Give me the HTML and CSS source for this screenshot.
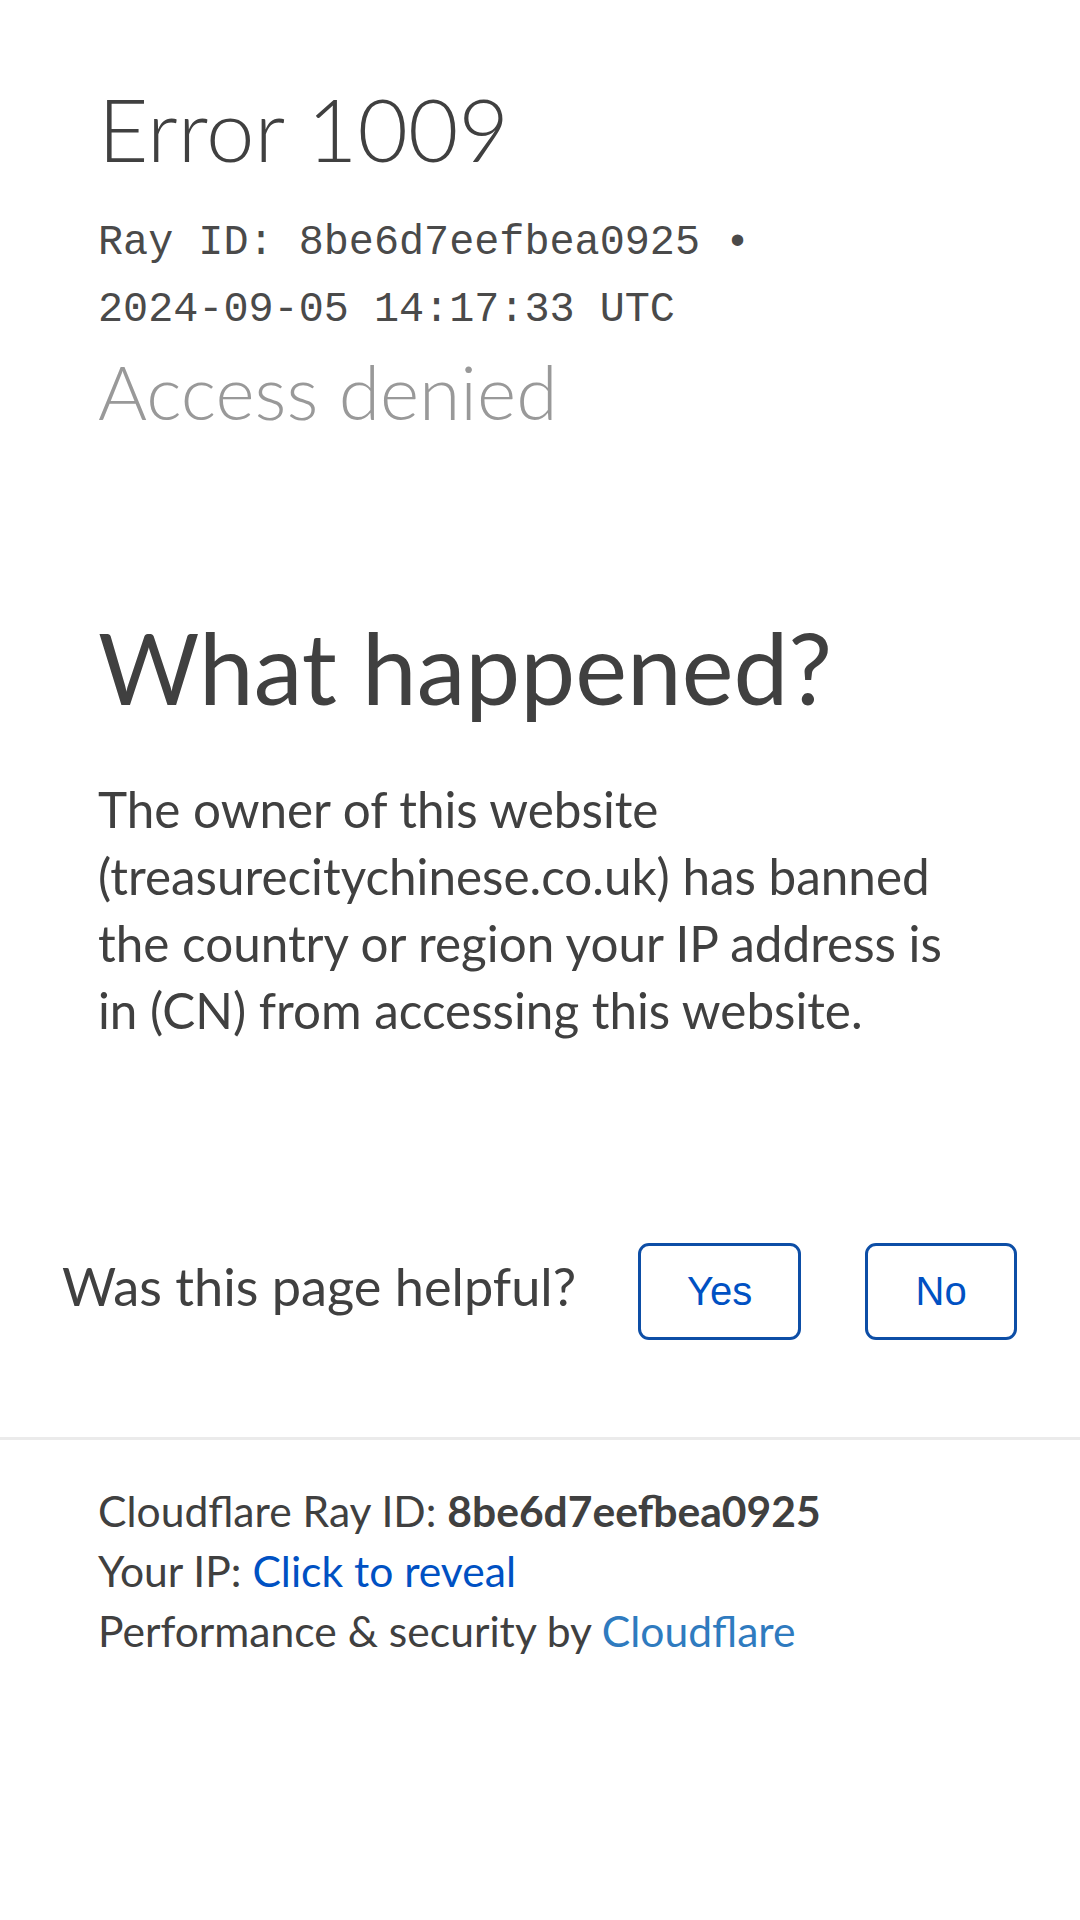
FILE: index.html
```html
<!DOCTYPE html>
<html lang="en">
<head>
<meta charset="utf-8">
<title>Access denied | treasurecitychinese.co.uk used Cloudflare to restrict access</title>
<link rel="stylesheet" href="styles.css">
</head>
<body>
<main class="page">
  <header class="error-header">
    <h1 class="error-title">Error 1009</h1>
    <div class="ray-meta"><span class="nowrap">Ray ID: 8be6d7eefbea0925</span> <span class="sep">&bull;</span> <span class="nowrap">2024-09-05 14:17:33 UTC</span></div>
    <h2 class="error-subtitle">Access denied</h2>
  </header>

  <section class="what-happened">
    <h2 class="section-title">What happened?</h2>
    <p class="section-text">The owner of this website (treasurecitychinese.co.uk) has banned the country or region your IP address is in (CN) from accessing this website.</p>
  </section>

  <div class="feedback">
    <span class="feedback-question">Was this page helpful?</span>
    <button class="feedback-btn feedback-btn-yes" type="button">Yes</button>
    <button class="feedback-btn feedback-btn-no" type="button">No</button>
  </div>

  <footer class="footer">
    <p class="footer-line">Cloudflare Ray ID: <strong class="ray-strong">8be6d7eefbea0925</strong></p>
    <p class="footer-line">Your IP: <a class="reveal-link" href="#">Click to reveal</a></p>
    <p class="footer-line">Performance &amp; security by <a class="cf-link" href="#">Cloudflare</a></p>
  </footer>
</main>
</body>
</html>
```
FILE: styles.css
```css
html, body {
  margin: 0;
  padding: 0;
  background: #ffffff;
}

body {
  font-family: "Lato", "Open Sans", sans-serif;
  color: #404040;
}

.page {
  display: flex;
  flex-direction: column;
  padding-top: 79px;
}

.error-header {
  padding: 0 98px;
}

.error-title {
  margin: 0;
  font-size: 87px;
  line-height: 100px;
  font-weight: 300;
  color: #404040;
}

.ray-meta {
  margin-top: 31px;
  font-family: "Liberation Mono", "Courier New", monospace;
  font-size: 41.8px;
  line-height: 67px;
  color: #4a4a4a;
  max-width: 884px;
}

.nowrap {
  white-space: nowrap;
}

.error-subtitle {
  margin: 4px 0 0;
  font-size: 75px;
  line-height: 86px;
  font-weight: 300;
  color: #999999;
}

.what-happened {
  padding: 0 98px;
  margin-top: 177px;
}

.section-title {
  margin: 0;
  font-size: 98px;
  line-height: 112px;
  font-weight: 400;
  color: #404040;
}

.section-text {
  margin: 53px 0 0;
  max-width: 874px;
  font-size: 49.4px;
  line-height: 67px;
}

.feedback {
  display: flex;
  align-items: flex-start;
  margin-top: 199px;
  padding-left: 62px;
}

.feedback-question {
  margin-top: 8px;
  margin-right: 62px;
  font-size: 52.3px;
  line-height: 70px;
  color: #404040;
}

.feedback-btn {
  box-sizing: border-box;
  height: 97px;
  padding: 0;
  border: 3px solid #0d4ea6;
  border-radius: 11px;
  background: #ffffff;
  color: #0051c3;
  font-family: "Liberation Sans", Arial, sans-serif;
  font-size: 40px;
  cursor: pointer;
}

.feedback-btn-yes {
  width: 163px;
  margin-right: 64px;
}

.feedback-btn-no {
  width: 152px;
}

.footer {
  margin-top: 97px;
  border-top: 3px solid #ebebeb;
  padding: 41px 98px 0;
}

.footer-line {
  margin: 0;
  font-size: 42.6px;
  line-height: 60px;
}

.ray-strong {
  font-weight: 700;
}

.reveal-link {
  color: #0051c3;
  text-decoration: none;
}

.cf-link {
  color: #2f7bbf;
  text-decoration: none;
}
```
